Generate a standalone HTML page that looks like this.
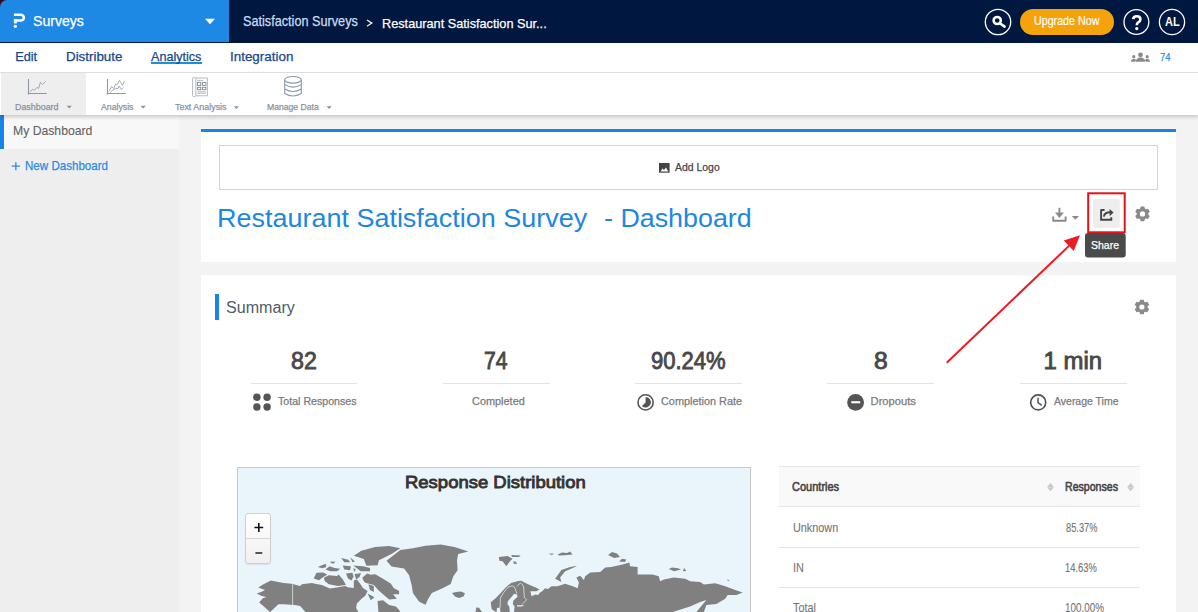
<!DOCTYPE html>
<html><head><meta charset="utf-8">
<style>
*{margin:0;padding:0;box-sizing:border-box}
html,body{width:1198px;height:612px;overflow:hidden;background:#f3f3f3;font-family:"Liberation Sans",sans-serif}
.a{position:absolute}
.t{position:absolute;white-space:pre;line-height:1;transform-origin:0 0}
svg{position:absolute;overflow:visible}
</style></head><body>
<!-- header -->
<div class="a" style="left:0;top:0;width:1198px;height:43px;background:#00183f"></div>
<div class="a" style="left:0;top:0;width:8px;height:8px;background:#3a0818"></div>
<div class="a" style="left:0;top:0;width:229px;height:42px;background:#1e88e5;border-top-left-radius:7px"></div>
<svg style="left:0;top:0" width="229" height="42"><path d="M13.9,14.7 H21 A2.85,2.85 0 0 1 21,20.4 H13.9" fill="none" stroke="#fff" stroke-width="2.5"/><rect x="13.9" y="19.2" width="2.9" height="4.2" fill="#fff"/><circle cx="15.4" cy="26.3" r="1.6" fill="#fff"/>
<path d="M205,18.8 L215,18.8 L210,24.2 Z" fill="#fff"/></svg>
<svg style="left:0;top:0" width="1198" height="42">
<path d="M367,20 L371.8,23.1 L367,26.2" fill="none" stroke="#e6edf5" stroke-width="1.35"/>
<circle cx="998" cy="22" r="12.7" fill="none" stroke="#fff" stroke-width="1.3"/>
<circle cx="997.2" cy="20.5" r="3.6" fill="none" stroke="#fff" stroke-width="2.5"/>
<path d="M999.8,23.2 L1004.6,26.6" stroke="#fff" stroke-width="2.6" stroke-linecap="round"/>
<rect x="1020" y="9" width="94" height="26" rx="13" fill="#f4a30b"/>
<circle cx="1136.4" cy="22" r="12.4" fill="none" stroke="#fff" stroke-width="1.3"/>
<circle cx="1172" cy="22" r="12.6" fill="none" stroke="#fff" stroke-width="1.3"/>
<path d="M1133.2,19.2 Q1133.4,16.2 1136.8,16.2 Q1140.4,16.2 1140.4,19.2 Q1140.4,21.2 1138.2,22.4 Q1136.8,23.2 1136.8,25.2" fill="none" stroke="#fff" stroke-width="2.6"/>
<circle cx="1136.8" cy="28.6" r="1.6" fill="#fff"/>
</svg>

<!-- menu row -->
<div class="a" style="left:0;top:43px;width:1198px;height:30px;background:#fff;border-bottom:1px solid #e2e2e2"></div>
<div class="a" style="left:151px;top:62px;width:51px;height:2px;background:#1d90d8"></div>
<svg style="left:0;top:0" width="1198" height="72">
<g fill="#8a8a8a">
<circle cx="1140.5" cy="54.8" r="2.4"/><path d="M1135.6,61.8 Q1136.2,57.8 1140.5,57.6 Q1144.8,57.8 1145.4,61.8 Z"/>
<circle cx="1133.8" cy="56.7" r="1.6"/><path d="M1130.8,61.8 Q1131.2,59 1133.8,58.8 Q1135.6,59 1136.2,60 L1135,61.8 Z"/>
<circle cx="1147.2" cy="56.7" r="1.6"/><path d="M1150.2,61.8 Q1149.8,59 1147.2,58.8 Q1145.4,59 1144.8,60 L1146,61.8 Z"/>
</g></svg>

<!-- sidebar -->
<div class="a" style="left:0;top:115px;width:179px;height:497px;background:#eeeeee"></div>
<div class="a" style="left:0;top:115px;width:179px;height:34px;background:#f8f8f8"></div>
<div class="a" style="left:0;top:115px;width:4px;height:34px;background:#1a84e6"></div>
<svg style="left:0;top:0" width="179" height="200"><path d="M11.7,166.2 H20 M15.85,162.2 V170.2" stroke="#2a8ae2" stroke-width="1.3"/></svg>

<!-- toolbar -->
<div class="a" style="left:0;top:73px;width:1198px;height:42px;background:#fff;box-shadow:0 2px 4px rgba(0,0,0,.2)"></div>
<div class="a" style="left:1px;top:73px;width:85px;height:42px;background:#eeeeee"></div>
<svg style="left:0;top:0" width="400" height="115">
<g fill="none" stroke="#8c98a8" stroke-width="1.1">
<path d="M28.5,79.1 V94.4 M27.6,93.45 H46.8"/>
<path d="M107.5,79.1 V94.4 M106.6,93.45 H125.7"/>
<ellipse cx="293" cy="79.8" rx="8.3" ry="3.3"/>
<path d="M284.7,79.8 V93.5 Q293,98.5 301.3,93.5 V79.8"/>
<path d="M284.7,84.6 Q293,89.6 301.3,84.6 M284.7,89 Q293,94 301.3,89"/>
</g>
<g fill="none" stroke="#8c98a8" stroke-width="0.8">
<path d="M29.8,91.8 L32.7,89.3 L34.4,90.3 L37,87.4 L38.7,88.4 L40.4,82.3 L42.5,84.4 L45.7,81.2"/>
<path d="M108.9,91.4 L111.5,86.5 L113.6,88.4 L115.7,84.2 L117.4,84.4 L119.5,80.4 L122.5,85.3 L124.4,81.2"/>
<path d="M110.2,92.5 L114,89.1 L118.3,88.2 L119.1,86.1 L121.4,89.5 L123.6,87.2"/>
</g>
<g fill="none" stroke="#a9b2bd" stroke-width="0.9">
<path d="M195.8,78 H207.4 V95.8 H195.8"/>
<path d="M192.6,78.6 Q192.6,77.4 194.2,77.4 Q195.8,77.4 195.8,78.6 V95.8 Q195.8,96.6 194.2,96.6 Q192.6,96.6 192.6,95.8 Z"/>
<path d="M197.3,80.4 H203.2 M197.3,91.8 H205.8 M197.3,93.3 H205.8"/>
</g>
<g fill="none" stroke="#7d8896" stroke-width="0.9">
<rect x="197.5" y="82.3" width="3.3" height="3.1"/><rect x="202.6" y="82.3" width="3.3" height="3.1"/>
<rect x="197.5" y="87.3" width="3.3" height="2.4"/><rect x="202.6" y="87.3" width="3.3" height="2.4"/>
</g>
<g fill="#8893a0">
<path d="M66.7,105.8 H71.9 L69.3,108.6 Z"/>
<path d="M140.5,105.8 H145.9 L143.2,108.6 Z"/>
<path d="M233.8,106.2 H239 L236.4,108.9 Z"/>
<path d="M326.5,106.2 H331.8 L329.1,108.9 Z"/>
</g></svg>

<!-- card 1 -->
<div class="a" style="left:201px;top:129px;width:975px;height:133px;background:#fff;border-top:3px solid #1a84e6"></div>
<div class="a" style="left:219px;top:145px;width:939px;height:45px;border:1px solid #d4d4d4"></div>
<svg style="left:0;top:0" width="1198" height="380">
<rect x="659" y="163" width="10.6" height="9.7" fill="#444"/>
<path d="M660.5,171.5 L662.5,168.5 L664,170 L666,167.5 L668.3,171.5 Z" fill="#fff"/>
<!-- download -->
<g fill="none" stroke="#8a8a8a" stroke-width="1.9">
<path d="M1053.2,216.4 V220.7 H1065.6 V216.4" stroke-linejoin="round"/>
<path d="M1059.4,207.8 V214.5"/>
</g>
<path d="M1055,212.6 H1063.8 L1059.4,217.9 Z" fill="#8a8a8a"/>
<path d="M1071.8,216 H1079 L1075.4,219.8 Z" fill="#8a8a8a"/>
<rect x="1093.2" y="199" width="26.6" height="29" rx="2" fill="#eeeeee"/>
<g fill="none" stroke="#444" stroke-width="1.9">
<path d="M1104.6,210 H1101.4 Q1101.1,210 1101.1,210.4 V219.8 H1111.3 V217.2"/>
<path d="M1103.8,216.6 Q1104.6,212.3 1110,212.3"/>
</g>
<path d="M1109.6,208.9 L1113.6,212.6 L1109.6,216.2 Z" fill="#444"/>
<rect x="1088.2" y="193.3" width="36.5" height="39" fill="none" stroke="#e5121b" stroke-width="2"/>
<rect x="1085" y="233" width="40.7" height="24.6" rx="3" fill="#4a4a4a"/>
</svg>

<!-- card 2 -->
<div class="a" style="left:201px;top:275px;width:975px;height:337px;background:#fff"></div>
<div class="a" style="left:215px;top:294px;width:4px;height:26px;background:#1a84e6"></div>
<svg style="left:0;top:0" width="1198" height="612">
<path fill="#8a8a8a" fill-rule="evenodd" d="M1140.14,208.60 L1140.75,206.50 L1144.25,206.50 L1144.86,208.60 L1145.91,209.20 L1148.03,208.68 L1149.78,211.72 L1148.27,213.30 L1148.27,214.50 L1149.78,216.08 L1148.03,219.12 L1145.91,218.60 L1144.86,219.20 L1144.25,221.30 L1140.75,221.30 L1140.14,219.20 L1139.09,218.60 L1136.97,219.12 L1135.22,216.08 L1136.73,214.50 L1136.73,213.30 L1135.22,211.72 L1136.97,208.68 L1139.09,209.20 Z M1145.10,213.90 A2.6,2.6 0 1 0 1139.90,213.90 A2.6,2.6 0 1 0 1145.10,213.90 Z"/>
<path fill="#8a8a8a" fill-rule="evenodd" d="M1139.54,301.80 L1140.15,299.70 L1143.65,299.70 L1144.26,301.80 L1145.22,302.35 L1147.35,301.83 L1149.10,304.87 L1147.58,306.45 L1147.58,307.55 L1149.10,309.13 L1147.35,312.17 L1145.22,311.65 L1144.26,312.20 L1143.65,314.30 L1140.15,314.30 L1139.54,312.20 L1138.58,311.65 L1136.45,312.17 L1134.70,309.13 L1136.22,307.55 L1136.22,306.45 L1134.70,304.87 L1136.45,301.83 L1138.58,302.35 Z M1144.50,307.00 A2.6,2.6 0 1 0 1139.30,307.00 A2.6,2.6 0 1 0 1144.50,307.00 Z"/>
<g stroke="#e3e3e3" stroke-width="1">
<path d="M251,383.5 H357 M443,383.5 H550 M635,383.5 H742 M827,383.5 H934 M1020,383.5 H1127"/>
</g>
<g fill="#555">
<circle cx="256.9" cy="397.2" r="3.7"/><circle cx="267.1" cy="397.2" r="3.7"/>
<circle cx="256.9" cy="407" r="3.7"/><circle cx="267.1" cy="407" r="3.7"/>
</g>
<circle cx="645.6" cy="402.4" r="7.6" fill="none" stroke="#555" stroke-width="1.6"/>
<path d="M645.6,397 A5.3,5.3 0 1 1 641.9,406.1 L645.6,402.4 Z" fill="#555"/>
<circle cx="855.6" cy="402.4" r="8.4" fill="#555"/>
<rect x="851.3" y="401.2" width="8.9" height="2.1" fill="#fff"/>
<circle cx="1038.2" cy="402.4" r="7.5" fill="none" stroke="#505050" stroke-width="1.6"/>
<path d="M1038,397.8 V402.6 L1041.8,405.3" fill="none" stroke="#555" stroke-width="1.5"/>
</svg>

<!-- map -->
<div class="a" style="left:237px;top:467px;width:514px;height:150px;background:#e9f5fb;border:1px solid #c8c8c8"></div>
<div class="a" style="left:245px;top:513px;width:25.5px;height:51px;border:1px solid #cfcfcf;border-radius:3px;background:linear-gradient(#fff,#f0f0f0);box-shadow:0 1px 1px rgba(0,0,0,.08)"></div>
<div class="a" style="left:246px;top:538px;width:23.5px;height:1px;background:#d6d6d6"></div>
<svg style="left:0;top:0" width="1198" height="612">
<path d="M254.4,527.5 H263.2 M258.8,523.1 V531.9" stroke="#111" stroke-width="1.6"/>
<path d="M255.4,553 H262.3" stroke="#111" stroke-width="1.4"/>
<g id="world">
<g fill="#808080">
<!-- Alaska+Canada mainland -->
<path d="M258.3,587.5 L263.4,584.2 L270.9,580.4 L283.4,582.9 L291.7,583.8 L300.1,585.9 L301.8,584.2 L311.8,582.9 L315.1,583.8 L321.8,585 L327.6,587.5 L330.1,588.4 L336.8,587.5 L345.2,585.9 L347.7,587.3 L353.8,588 L353.8,580.4 L356.9,579.6 L360,583.4 L363,588 L367.6,591.1 L365.3,595.7 L361.5,598.8 L356.9,603.4 L356.1,608 L358.4,612 L305.1,612 L300.1,605.9 L293.4,605.1 L284.2,604.2 L278.4,604.2 L275,607.6 L270,612 L265,607.6 L259.2,602.5 L262.5,598.4 L266.3,597.1 L261.7,595.9 L256.7,593.4 L261.7,591.7 L265,590 Z"/>
<!-- Quebec / Labrador -->
<path d="M377.6,601.1 L383,600.3 L389.1,604.9 L396,606.5 L399.9,611.1 L400,612 L378.4,612 Z"/>
<!-- Southampton -->
<path d="M367.6,593.4 L374.5,597.2 L370.7,600.3 Z"/>
<!-- Baffin -->
<path d="M363,577.3 L367.6,575 L375.3,574.2 L383,578.8 L390.7,583.4 L393.7,588 L399.1,591.1 L399.1,594.2 L393,594.2 L396.8,598.8 L389.1,599.5 L383,594.2 L378.4,590.3 L373.8,585 L365.3,582.7 Z"/>
<path d="M368.4,584.2 L373.8,586 L373.8,591.9 L370,590 Z"/>
<!-- Banks -->
<path d="M313.7,578.5 L316.5,572.8 L323.1,572.4 L327.2,574.4 L322.3,577.7 L319,580.2 Z"/>
<!-- Victoria -->
<path d="M323.9,577.7 L328.8,575.3 L337,576.1 L338.6,574.4 L342.7,579.3 L346,585.1 L337.8,585.9 L328.8,584.2 L324.7,581 Z"/>
<!-- small arctic islands -->
<path d="M317.8,567.1 L325.5,563.8 L326.4,567.1 L322.3,568.3 Z"/>
<path d="M325.5,569.5 L329.6,566.3 L334.5,567.9 L340.3,568.7 L337,571.2 L330.4,571.2 Z"/>
<path d="M330.4,561.4 L335.3,561.8 L334,563.4 L331,563.2 Z"/>
<path d="M341.1,558.1 L348.4,559.7 L350.1,562.2 L344.3,562.2 Z"/>
<path d="M350.1,557.3 L355,561.4 L352.5,562.2 Z"/>
<path d="M342.7,565.4 L350.9,566.3 L350.1,570.3 L344.3,569.5 Z"/>
<path d="M346,573.6 L352.4,572.8 L353.5,576.5 L351.5,580.4 L348,578.5 Z"/>
<path d="M353.3,567.9 L355.8,569.5 L354.2,572 Z"/>
<path d="M354.6,574 L361,573.3 L359.5,577 L356,579.5 Z"/>
<path d="M353.3,565.4 L363.1,566.3 L370,567.9 L370,571.2 L360.7,571.2 Z"/>
<path d="M362.3,577.7 L367.2,573.6 L370,574.4 L370,583.4 L364,581.8 Z"/>
<!-- Ellesmere -->
<path d="M361.3,550.7 L375.2,547 L389,546.1 L400.3,548.2 L391.5,553.9 L378.9,560.2 L377.7,565.2 L366.4,565.8 L363.8,558.9 L353.8,555.8 Z"/>
<!-- Greenland -->
<path d="M386.5,560.8 L400.3,550.1 L412.9,548.2 L425.5,545.7 L440.6,544.4 L454.5,547 L468.3,551.4 L458.2,553.9 L457,560.2 L457.6,570.2 L453.2,576.5 L450.7,584.1 L443.1,587.9 L431.8,592.9 L428,599.2 L425.5,604.8 L419.2,601.7 L412.9,592.9 L411.7,585.3 L409.1,575.3 L404.1,568.4 L391.5,566.5 Z"/>
<!-- Iceland -->
<path d="M452,593 L456,592 L461,591.4 L465,593.2 L463.5,596.6 L459,598 L455,596.5 Z"/>
<!-- UK -->
<path d="M476.3,607.5 L479,607.8 L481.3,611 L482,612 L475.5,612 Z"/>
<!-- Svalbard -->
<path d="M498.8,556.9 L507.6,556 L512.6,558.8 L510,561.3 L506.3,566.3 L502.6,561.3 L499.4,560.7 Z"/>
<path d="M513.2,561.3 L516,561.8 L517,563.8 L514,564 Z"/>
<path d="M511.3,555 L520.7,555.6 L519,557 L512,557 Z"/>
<!-- Franz Josef -->
<path d="M548.3,553.8 L553.9,553.6 L552,555 Z"/>
<path d="M557.6,554.5 L562,552.5 L567,553 L570,551.4 L572.7,554.4 L565,555.2 L559,555.6 Z"/>
<!-- Novaya Zemlya -->
<path d="M555.1,578.8 L561.4,570 L570.2,566.9 L577,565.7 L573.9,567.5 L565.2,571.3 L560.1,577.6 L561.4,582 Z"/>
<!-- Severnaya Zemlya -->
<path d="M608.1,555 L612,552 L617,553.5 L620,557 L614,558 Z"/>
<path d="M619,561.5 L622,558.8 L626.3,559.5 L625,561.9 Z"/>
<!-- New Siberian -->
<path d="M668.9,569 L672,567.6 L678,568.3 L681,569.6 L674,571.3 Z"/>
<path d="M684,568 L686.4,571 L683,571.3 Z"/>
<path d="M727,579.8 L730,580 L728,581 Z"/>
<!-- Scandinavia + Russia -->
<path d="M490.7,602.2 L495.9,598 L500.7,593.1 L506.1,587.1 L511,582.9 L518.2,581 L521.3,580.7 L525.5,582.9 L530.3,585.3 L536.4,587.7 L539.4,589.5 L536.4,591.3 L530.3,591.3 L531.6,596.2 L535.2,594.4 L538.2,595 L540,592.5 L542.4,591.3 L544.9,588.3 L548,588.9 L551.4,586.3 L557.6,586.3 L565.2,583.8 L572.7,586.3 L577.7,588.2 L578.9,582.6 L576.4,577.6 L580.2,575.7 L583.9,580.1 L585.2,576.3 L590.2,572.6 L600.2,571.9 L605.2,567.5 L611.3,566.9 L622.5,564.4 L629.4,562.5 L630,566.3 L637.6,566.9 L637.6,574.4 L652.6,574.4 L658.8,576.3 L660.1,581.3 L663.9,579.4 L673.9,577.6 L685.1,578.8 L690.1,581.3 L700.2,581.9 L703.9,584.4 L715.2,583.2 L725.2,586.3 L735.2,590.1 L742.7,592.6 L736.5,595.1 L727.7,595.1 L725.2,598.8 L716.4,603.9 L706.4,605.1 L703.9,612 L495.9,612 L491.6,608.9 Z"/>
</g>
<g fill="#e9f5fb">
<!-- Hudson bay handled by mainland; Gulf of Bothnia -->
<path d="M517,594.4 L514,593.8 L512.2,596.2 L508,601 L507.4,604 L509.2,606.5 L509.8,612 L514,612 L514.6,606.5 L512.8,604 L513.4,600.4 L517.6,596.8 Z"/>
<path d="M517,605.2 L524.3,605.2 L521.9,606.5 L517,606.5 Z"/>
<path d="M497,608 L500,607.5 L500.5,612 L496.5,612 Z"/>
<!-- Okhotsk -->
<path d="M672.6,612 L690.1,606.4 L700.2,602 L706.4,600.1 L696.4,612 Z"/>
</g>
<g fill="none" stroke="#e9f5fb" stroke-width="0.7">
<path d="M292.6,584.2 L292.6,605.1 L300.1,606.7 L305.1,612"/>
<path d="M500.1,607.7 L500.4,598 L503.7,592.5 L508,587.1 L512.2,585.9 L514.6,587.1 L517,593.8"/>
<path d="M517,586.5 L519,584 L521.3,582.9"/>
<path d="M521.9,583.5 L523.7,587.1 L524.3,597.4 L526.7,599.8 L521.9,604.6"/>
</g>
</g>
</svg>

<!-- table -->
<div class="a" style="left:779px;top:466px;width:361px;height:41px;background:#f9f9f9;border-top:1px solid #e6e6e6;border-bottom:1px solid #e6e6e6"></div>
<div class="a" style="left:779px;top:547px;width:361px;height:1px;background:#e6e6e6"></div>
<div class="a" style="left:779px;top:587px;width:361px;height:1px;background:#e6e6e6"></div>
<svg style="left:0;top:0" width="1198" height="612"><g fill="#c9c9c9">
<path d="M1047.1,486.9 L1050.5,482.9 L1053.9,486.9 Z M1047.1,487.3 L1050.5,491.2 L1053.9,487.3 Z"/>
<path d="M1127.2,486.9 L1130.6,482.9 L1134,486.9 Z M1127.2,487.3 L1130.6,491.2 L1134,487.3 Z"/>
</g></svg>

<div class="t" style="left:33.49px;top:14.18px;font-size:14.49px;color:#fff;transform:scaleX(0.973);-webkit-text-stroke:0.25px #fff">Surveys</div>
<div class="t" style="left:243.07px;top:14.18px;font-size:14.49px;color:#c9def2;transform:scaleX(0.875);-webkit-text-stroke:0.25px #c9def2">Satisfaction Surveys</div>
<div class="t" style="left:381.68px;top:17.04px;font-size:13.48px;color:#fff;transform:scaleX(0.944);-webkit-text-stroke:0.25px #fff">Restaurant Satisfaction Sur...</div>
<div class="t" style="left:1034.34px;top:15.50px;font-size:11.88px;color:#fff;transform:scaleX(0.900);-webkit-text-stroke:0.15px #fff">Upgrade Now</div>
<div class="t" style="left:1164.67px;top:16.44px;font-size:12.90px;color:#fff;font-weight:700;transform:scaleX(0.855)">AL</div>
<div class="t" style="left:15.18px;top:50.66px;font-size:12.75px;color:#18478c;-webkit-text-stroke:0.25px #18478c">Edit</div>
<div class="t" style="left:65.83px;top:50.66px;font-size:12.75px;color:#18478c;transform:scaleX(1.048);-webkit-text-stroke:0.25px #18478c">Distribute</div>
<div class="t" style="left:151.40px;top:50.66px;font-size:12.75px;color:#18478c;transform:scaleX(0.988);-webkit-text-stroke:0.25px #18478c">Analytics</div>
<div class="t" style="left:229.79px;top:50.66px;font-size:12.75px;color:#18478c;transform:scaleX(1.052);-webkit-text-stroke:0.25px #18478c">Integration</div>
<div class="t" style="left:1159.83px;top:51.54px;font-size:11.59px;color:#2d8cf0;transform:scaleX(0.812);-webkit-text-stroke:0.25px #2d8cf0">74</div>
<div class="t" style="left:15.19px;top:102.49px;font-size:9.42px;color:#8893a0;transform:scaleX(0.945);-webkit-text-stroke:0.25px #8893a0">Dashboard</div>
<div class="t" style="left:100.50px;top:102.49px;font-size:9.42px;color:#8893a0;transform:scaleX(0.926);-webkit-text-stroke:0.25px #8893a0">Analysis</div>
<div class="t" style="left:174.62px;top:102.74px;font-size:9.13px;color:#8893a0;transform:scaleX(0.977);-webkit-text-stroke:0.25px #8893a0">Text Analysis</div>
<div class="t" style="left:267.21px;top:102.74px;font-size:9.13px;color:#8893a0;transform:scaleX(0.945);-webkit-text-stroke:0.25px #8893a0">Manage Data</div>
<div class="t" style="left:12.62px;top:124.84px;font-size:12.90px;color:#636363;transform:scaleX(0.947);-webkit-text-stroke:0.1px #636363">My Dashboard</div>
<div class="t" style="left:24.87px;top:159.09px;font-size:13.19px;color:#2a8ae2;transform:scaleX(0.878);-webkit-text-stroke:0.25px #2a8ae2">New Dashboard</div>
<div class="t" style="left:675.00px;top:161.96px;font-size:10.87px;color:#444;transform:scaleX(0.961);-webkit-text-stroke:0.25px #444">Add Logo</div>
<div class="t" style="left:217.14px;top:205.26px;font-size:26.52px;color:#1c87e3;transform:scaleX(1.017)">Restaurant Satisfaction Survey</div>
<div class="t" style="left:603.93px;top:205.26px;font-size:26.52px;color:#1c87e3;transform:scaleX(1.012)">- Dashboard</div>
<div class="t" style="left:1091.37px;top:240.16px;font-size:10.87px;color:#fff;transform:scaleX(0.967);-webkit-text-stroke:0.25px #fff">Share</div>
<div class="t" style="left:226.10px;top:298.84px;font-size:17.25px;color:#4f5b68;transform:scaleX(0.933)">Summary</div>
<div class="t" style="left:291.27px;top:348.67px;font-size:23.91px;color:#484848;transform:scaleX(0.972);-webkit-text-stroke:0.85px #484848">82</div>
<div class="t" style="left:484.24px;top:348.67px;font-size:23.91px;color:#484848;transform:scaleX(0.885);-webkit-text-stroke:0.85px #484848">74</div>
<div class="t" style="left:650.90px;top:348.67px;font-size:23.91px;color:#484848;transform:scaleX(0.921);-webkit-text-stroke:0.85px #484848">90.24%</div>
<div class="t" style="left:874.21px;top:348.67px;font-size:23.91px;color:#484848;transform:scaleX(1.032);-webkit-text-stroke:0.85px #484848">8</div>
<div class="t" style="left:1043.59px;top:348.67px;font-size:23.91px;color:#484848;-webkit-text-stroke:0.85px #484848">1 min</div>
<div class="t" style="left:277.69px;top:395.71px;font-size:11.16px;color:#7a7a7a;transform:scaleX(0.952);-webkit-text-stroke:0.25px #7a7a7a">Total Responses</div>
<div class="t" style="left:472.45px;top:395.71px;font-size:11.16px;color:#7a7a7a;transform:scaleX(0.978);-webkit-text-stroke:0.25px #7a7a7a">Completed</div>
<div class="t" style="left:660.66px;top:395.71px;font-size:11.16px;color:#7a7a7a;transform:scaleX(0.975);-webkit-text-stroke:0.25px #7a7a7a">Completion Rate</div>
<div class="t" style="left:870.60px;top:395.71px;font-size:11.16px;color:#7a7a7a;-webkit-text-stroke:0.25px #7a7a7a">Dropouts</div>
<div class="t" style="left:1053.70px;top:395.71px;font-size:11.16px;color:#7a7a7a;transform:scaleX(0.940);-webkit-text-stroke:0.25px #7a7a7a">Average Time</div>
<div class="t" style="left:404.62px;top:473.54px;font-size:17.25px;color:#333;transform:scaleX(1.071);-webkit-text-stroke:0.85px #333">Response Distribution</div>
<div class="t" style="left:792.45px;top:479.51px;font-size:13.04px;color:#444;transform:scaleX(0.845);-webkit-text-stroke:0.6px #444">Countries</div>
<div class="t" style="left:1065.05px;top:479.51px;font-size:13.04px;color:#444;transform:scaleX(0.812);-webkit-text-stroke:0.6px #444">Responses</div>
<div class="t" style="left:792.73px;top:521.55px;font-size:12.17px;color:#747474;transform:scaleX(0.891);-webkit-text-stroke:0.1px #747474">Unknown</div>
<div class="t" style="left:1065.53px;top:521.55px;font-size:12.17px;color:#747474;transform:scaleX(0.762);-webkit-text-stroke:0.1px #747474">85.37%</div>
<div class="t" style="left:792.62px;top:561.73px;font-size:12.32px;color:#747474;transform:scaleX(0.880);-webkit-text-stroke:0.1px #747474">IN</div>
<div class="t" style="left:1065.15px;top:561.73px;font-size:12.32px;color:#747474;transform:scaleX(0.762);-webkit-text-stroke:0.1px #747474">14.63%</div>
<div class="t" style="left:793.38px;top:600.81px;font-size:13.04px;color:#747474;transform:scaleX(0.831);-webkit-text-stroke:0.1px #747474">Total</div>
<div class="t" style="left:1065.11px;top:600.81px;font-size:13.04px;color:#747474;transform:scaleX(0.759);-webkit-text-stroke:0.1px #747474">100.00%</div>
<svg style="left:0;top:0" width="1198" height="612">
<!-- arrow -->
<path d="M946.7,362.7 L1069.5,245.4" stroke="#ec1c24" stroke-width="2"/>
<path d="M1080,235.2 L1063.8,240.6 L1073.7,251.1 Z" fill="#ec1c24"/>
</svg>
</body></html>
